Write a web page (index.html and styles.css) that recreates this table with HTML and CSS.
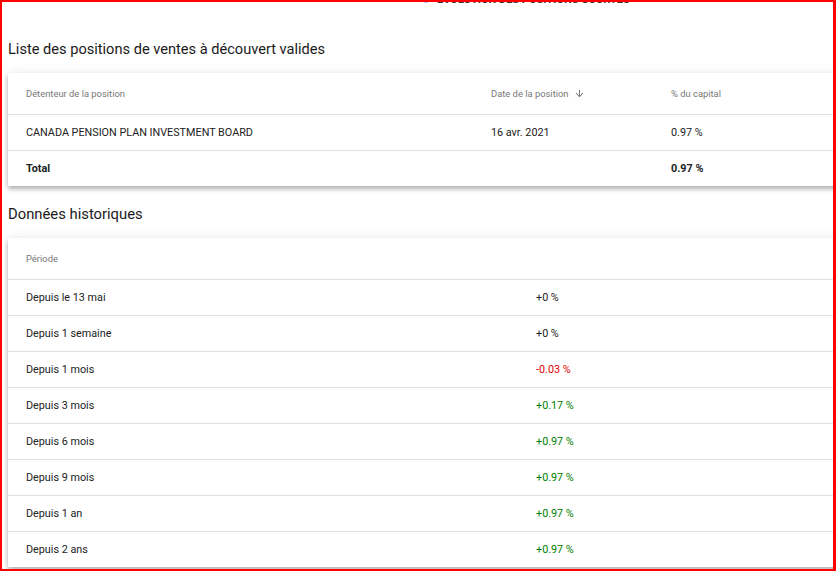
FILE: index.html
```html
<!DOCTYPE html>
<html lang="fr">
<head>
<meta charset="utf-8">
<title>Positions courtes</title>
<link rel="stylesheet" href="styles.css">
</head>
<body>
<div class="frame">
  <div class="page">
    <div class="legend"><span class="dot"></span><span class="legend-text">EVOLUTION DES POSITIONS COURTES</span></div>

    <h2 class="title">Liste des positions de ventes à découvert valides</h2>
    <div class="card">
      <div class="row head cols3">
        <div>Détenteur de la position</div>
        <div class="sort">Date de la position
          <svg class="arrow" viewBox="0 0 24 24" width="11" height="11"><path d="M20 12l-1.41-1.41L13 16.17V4h-2v12.17l-5.58-5.59L4 12l8 8 8-8z" fill="#757575"/></svg>
        </div>
        <div>% du capital</div>
      </div>
      <div class="row cols3">
        <div>CANADA PENSION PLAN INVESTMENT BOARD</div>
        <div>16 avr. 2021</div>
        <div>0.97 %</div>
      </div>
      <div class="row cols3 total">
        <div>Total</div>
        <div></div>
        <div>0.97 %</div>
      </div>
    </div>

    <h2 class="title title-2">Données historiques</h2>
    <div class="card">
      <div class="row head cols2"><div>Période</div><div></div></div>
      <div class="row cols2"><div>Depuis le 13 mai</div><div>+0 %</div></div>
      <div class="row cols2"><div>Depuis 1 semaine</div><div>+0 %</div></div>
      <div class="row cols2"><div>Depuis 1 mois</div><div class="neg">-0.03 %</div></div>
      <div class="row cols2"><div>Depuis 3 mois</div><div class="pos">+0.17 %</div></div>
      <div class="row cols2"><div>Depuis 6 mois</div><div class="pos">+0.97 %</div></div>
      <div class="row cols2"><div>Depuis 9 mois</div><div class="pos">+0.97 %</div></div>
      <div class="row cols2"><div>Depuis 1 an</div><div class="pos">+0.97 %</div></div>
      <div class="row cols2"><div>Depuis 2 ans</div><div class="pos">+0.97 %</div></div>
    </div>
  </div>
</div>
</body>
</html>
```

FILE: styles.css
```css
html, body {
  margin: 0;
  padding: 0;
  background: #fff;
}
.frame {
  width: 836px;
  height: 571px;
  box-sizing: border-box;
  border: 2px solid #ff0000;
  border-right-width: 3px;
  overflow: hidden;
  background: #fff;
}
.page {
  padding-left: 6px;
  font-family: Roboto, "Liberation Sans", Arial, sans-serif;
  color: #212121;
}
.legend {
  height: 12px;
  margin-top: -8px;
  padding-left: 415px;
  display: flex;
  align-items: center;
  gap: 8px;
  font-size: 11px;
  line-height: 12px;
  font-weight: bold;
  color: #333;
  white-space: nowrap;
}
.dot {
  width: 6px;
  height: 6px;
  border-radius: 50%;
  background: #9cc4f0;
}
.title {
  margin: 33px 0 0 0;
  font-size: 14.6px;
  font-weight: normal;
  line-height: 20px;
  height: 20px;
  color: #1a1a1a;
}
.title-2 {
  margin-top: 18px;
  font-size: 14.8px;
}
.card {
  width: 860px;
  margin-top: 14px;
  background: #fff;
  box-shadow: 0 3px 5px rgba(0,0,0,0.3), 0 -2px 10px rgba(0,0,0,0.05);
}
.row {
  display: grid;
  height: 36px;
  align-items: center;
  padding-left: 18px;
  border-top: 1px solid #e0e0e0;
  font-size: 10.8px;
  box-sizing: border-box;
}
.row.head {
  height: 41px;
  border-top: none;
  font-size: 9.4px;
  color: #777;
}
.cols3 {
  grid-template-columns: 465px 180px 1fr;
}
.cols2 {
  grid-template-columns: 510px 1fr;
}
.sort {
  display: flex;
  align-items: center;
  gap: 5px;
}
.arrow {
  display: block;
}
.total {
  font-weight: bold;
}
.pos {
  color: #008000;
}
.neg {
  color: #e00000;
}
```
